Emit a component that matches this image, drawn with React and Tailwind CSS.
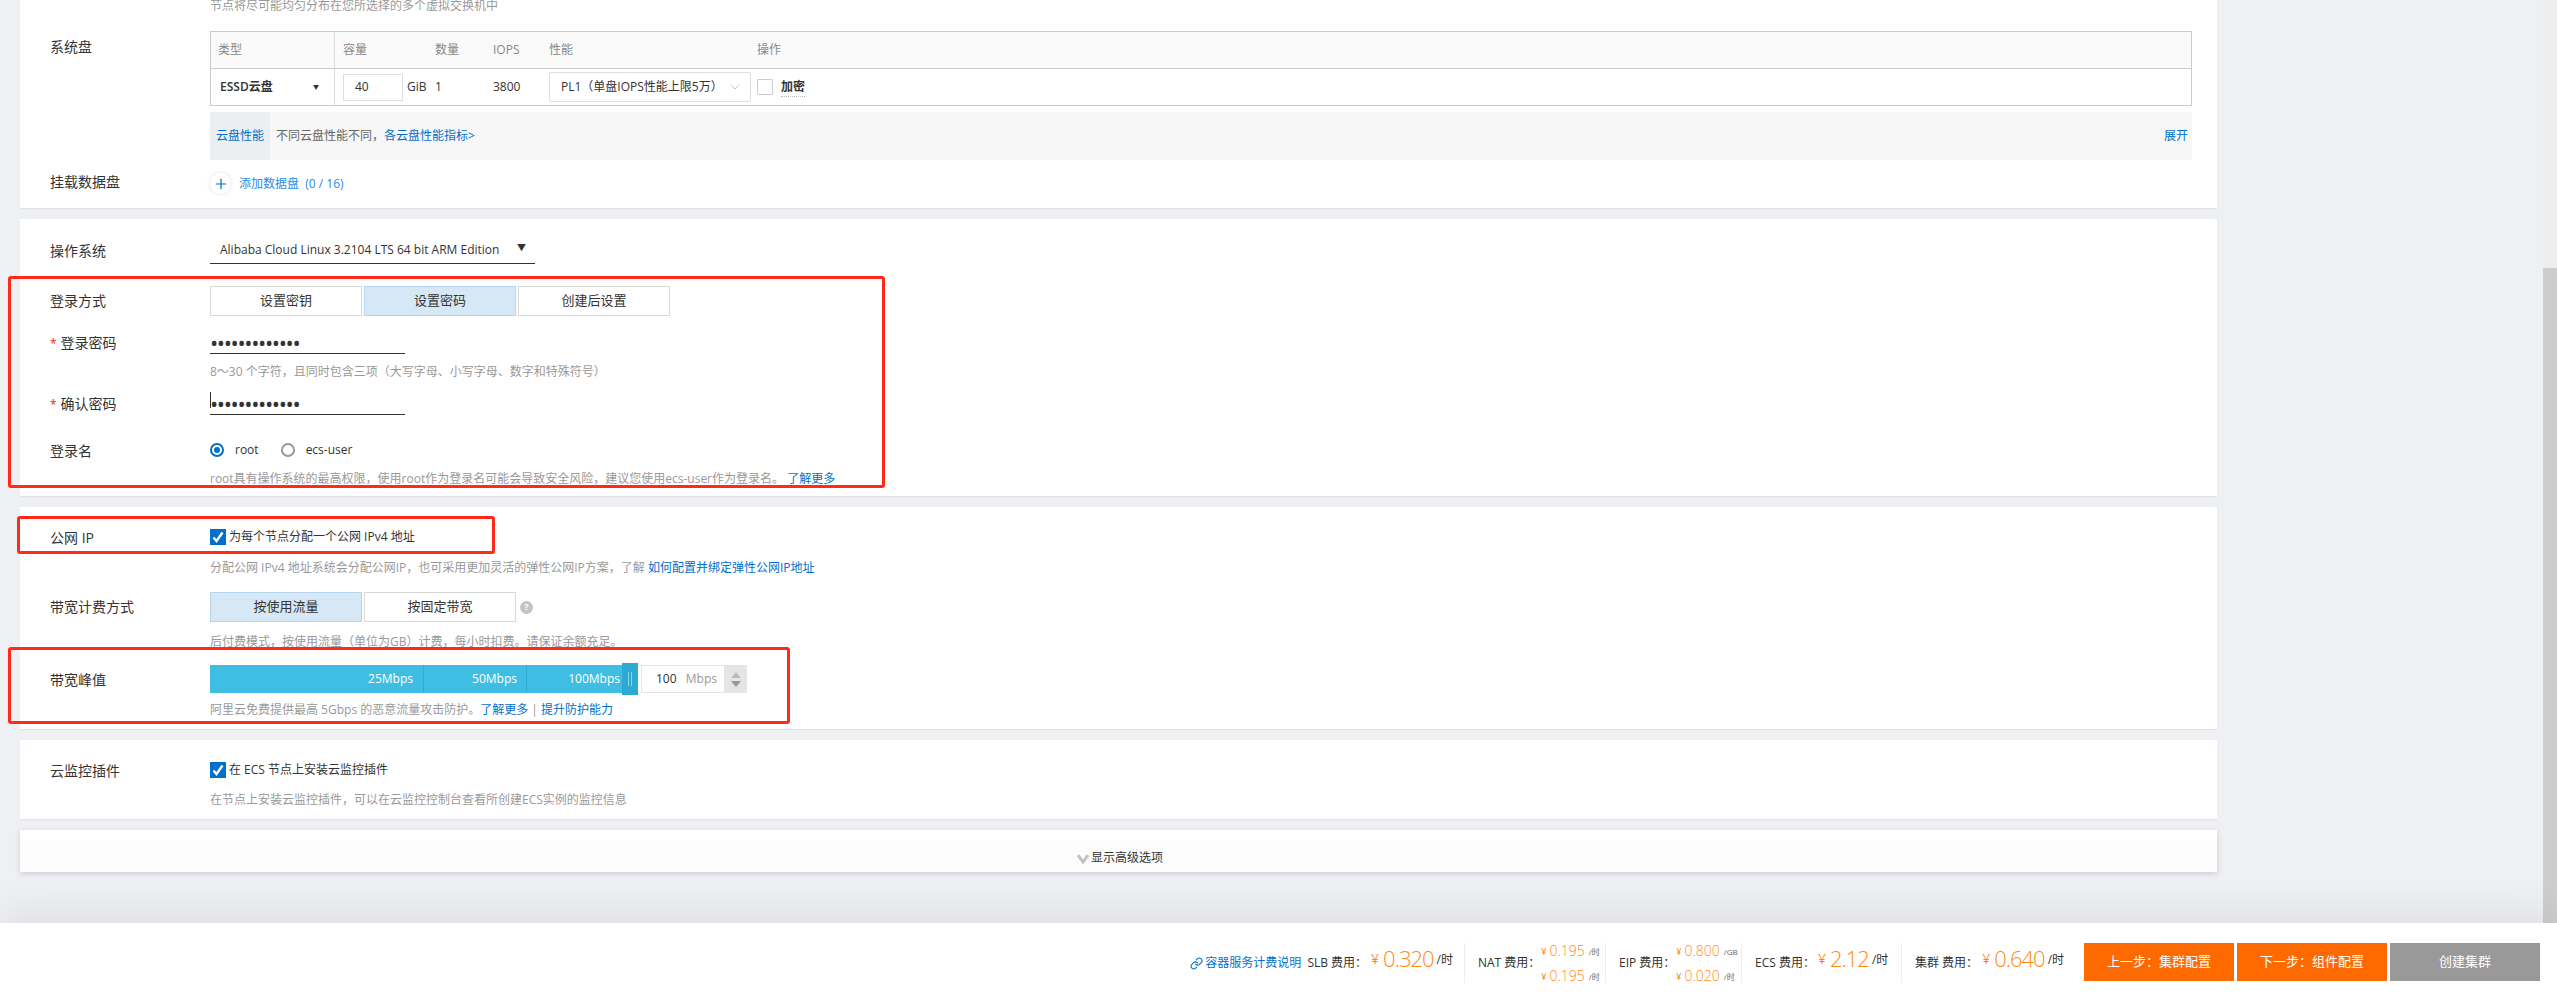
import { ChevronDown, Link, Plus } from 'lucide-react'

const hintCls = 'text-[12px] leading-[17px] text-[#999] whitespace-nowrap'
const linkCls = 'text-[#0070cc]'

function Row({ label, required, className = '', labelClass = '', children }) {
  return (
    <div className={`flex items-center pl-[30px] ${className}`}>
      <div className={`w-[160px] shrink-0 text-[14px] leading-[20px] text-[#333] whitespace-nowrap ${labelClass}`}>
        {required && <span className="text-[#e62412] text-[12px] mr-[4px]">*</span>}
        {label}
      </div>
      {children}
    </div>
  )
}

function Hint({ className = '', children }) {
  return <div className={`ml-[190px] ${hintCls} ${className}`}>{children}</div>
}

function Toggle({ active, children }) {
  return (
    <div className={`w-[152px] h-[30px] flex items-center justify-center text-[13px] text-[#333] border ${active ? 'bg-[#d6e8f5] border-[#b5d5ee]' : 'bg-white border-[#d9d9d9]'}`}>
      {children}
    </div>
  )
}

function Check({ children }) {
  return (
    <div className="flex items-center gap-[3px] text-[12px] text-[#333]">
      <span className="w-[16px] h-[16px] bg-[#0070cc] flex items-center justify-center">
        <svg width="12" height="12" viewBox="0 0 12 12">
          <path d="M1.5 6.5 L4.5 10 L10.5 1.5" fill="none" stroke="#fff" strokeWidth="2.4" />
        </svg>
      </span>
      {children}
    </div>
  )
}

function Radio({ on, children }) {
  return (
    <div className="flex items-center gap-[11px] text-[12px] text-[#333]">
      <span className={`w-[14px] h-[14px] rounded-full border-2 flex items-center justify-center ${on ? 'border-[#0070cc]' : 'border-[#999]'}`}>
        {on && <span className="w-[6px] h-[6px] rounded-full bg-[#0070cc]" />}
      </span>
      {children}
    </div>
  )
}

function PasswordInput({ caret }) {
  return (
    <div className="relative w-[195px] h-[24px] border-b border-[#333] flex items-center text-[22px] tracking-[-1.4px] text-[#333] leading-none">
      {caret && <span className="absolute left-0 top-[1px] w-px h-[16px] bg-[#333]" />}
      •••••••••••••
    </div>
  )
}

function RedBox({ className }) {
  return <div className={`absolute border-[3px] border-[#ff2a1a] rounded-[3px] pointer-events-none ${className}`} />
}

function Money({ big, value, unit }) {
  if (big) {
    return (
      <span className="flex items-center text-[#ff8a12] -mt-[10px]">
        <span className="text-[14px] mr-[4px]">¥</span>
        <span className="text-[22px] tracking-[-1px] leading-[30px] font-light">{value}</span>
        <span className="text-[12px] text-[#333] ml-[3px] mt-[4px]">/时</span>
      </span>
    )
  }
  return (
    <span className="flex items-center text-[#ff8a12] h-[25px]">
      <span className="text-[9px] mr-[3px] mt-[3px]">¥</span>
      <span className="text-[14px] font-light">{value}</span>
      <span className="text-[8px] text-[#666] ml-[4px] mt-[3px]">{unit}</span>
    </span>
  )
}

function FeeCell({ width, children }) {
  return (
    <div className={`${width} h-[40px] flex items-center pl-[13px] border-l border-[#eee] whitespace-nowrap`}>
      {children}
    </div>
  )
}

export default function App() {
  return (
    <div className="h-[1001px] overflow-hidden flex flex-col bg-[#eff0f4] font-['Open_Sans','Noto_Sans_CJK_SC',sans-serif]">
      <div className="flex-1 min-h-0 flex">
        <div className="flex-1 pl-[20px] pr-[326px]">
          {/* system disk */}
          <div className="h-[208px] bg-white shadow-[0_1px_1px_rgba(0,0,0,0.05)]">
            <Hint className="h-[31px] !leading-[12px]">节点将尽可能均匀分布在您所选择的多个虚拟交换机中</Hint>
            <div className="flex pl-[30px] pr-[25px]">
              <div className="w-[160px] shrink-0 text-[14px] leading-[20px] text-[#333] pt-[6px]">系统盘</div>
              <div className="flex-1 min-w-0">
                <div className="border border-[#ccc] text-[12px] text-[#333]">
                  <div className="h-[37px] flex items-center bg-[#fafafa] border-b border-[#ccc] text-[#888]">
                    <div className="w-[124px] h-full flex items-center pl-[7px] border-r border-[#ddd]">类型</div>
                    <div className="w-[100px] pl-[8px]">容量</div>
                    <div className="w-[58px]">数量</div>
                    <div className="w-[56px]">IOPS</div>
                    <div className="w-[208px]">性能</div>
                    <div>操作</div>
                  </div>
                  <div className="h-[36px] flex items-center">
                    <div className="w-[124px] h-full flex items-center justify-between pl-[9px] pr-[15px] border-r border-[#ddd] font-semibold">
                      ESSD云盘
                      <span className="text-[6px] text-[#333]">▼</span>
                    </div>
                    <div className="w-[100px] pl-[8px] flex items-center">
                      <span className="w-[60px] h-[27px] border border-[#ddd] flex items-center pl-[11px]">40</span>
                      <span className="ml-[4px]">GiB</span>
                    </div>
                    <div className="w-[58px]">1</div>
                    <div className="w-[56px]">3800</div>
                    <div className="w-[208px]">
                      <div className="w-[202px] h-[30px] border border-[#ddd] rounded-[2px] flex items-center justify-between pl-[11px] pr-[7px] whitespace-nowrap">
                        PL1（单盘IOPS性能上限5万）
                        <ChevronDown size={16} strokeWidth={1} color="#aaa" />
                      </div>
                    </div>
                    <div className="flex items-center gap-[8px]">
                      <span className="w-[16px] h-[16px] border border-[#ccc] rounded-[1px]" />
                      <span className="font-semibold border-b border-dotted border-[#bbb]">加密</span>
                    </div>
                  </div>
                </div>
                <div className="mt-[6px] h-[48px] bg-[#f7f7f8] flex items-center text-[12px] whitespace-nowrap">
                  <div className={`w-[60px] h-full bg-[#ebeff2] flex items-center justify-center ${linkCls}`}>云盘性能</div>
                  <span className="ml-[6px] text-[#666]">不同云盘性能不同，</span>
                  <span className={linkCls}>各云盘性能指标&gt;</span>
                  <span className={`ml-auto mr-[4px] ${linkCls}`}>展开</span>
                </div>
              </div>
            </div>
            <Row label="挂载数据盘" className="mt-[13px]" labelClass="-mt-[3px]">
              <div className="flex items-center text-[12px] text-[#2b8ae6]">
                <span className="w-[21px] h-[21px] rounded-full shadow-[0_0_4px_rgba(0,0,0,0.12)] flex items-center justify-center text-[#0070cc]">
                  <Plus size={16} strokeWidth={1.8} />
                </span>
                <span className="ml-[8px] whitespace-pre">添加数据盘  (0 / 16)</span>
              </div>
            </Row>
          </div>

          {/* login */}
          <div className="relative mt-[11px] h-[277px] bg-white pt-[18px] shadow-[0_1px_1px_rgba(0,0,0,0.05)]">
            <RedBox className="-left-[12px] top-[57px] w-[877px] h-[212px]" />
            <Row label="操作系统">
              <div className="relative w-[325px] h-[27px] border-b border-[#333] flex items-center pl-[10px] text-[12px] text-[#333]">
                Alibaba Cloud Linux 3.2104 LTS 64 bit ARM Edition
                <span className="absolute right-[9px] top-[4px] text-[9px] text-[#333]">▼</span>
              </div>
            </Row>
            <Row label="登录方式" className="mt-[22px]">
              <div className="flex gap-[2px]">
                <Toggle>设置密钥</Toggle>
                <Toggle active>设置密码</Toggle>
                <Toggle>创建后设置</Toggle>
              </div>
            </Row>
            <Row label="登录密码" required className="mt-[14px]" labelClass="mt-[3px]">
              <PasswordInput />
            </Row>
            <Hint className="mt-[9px]">8～30 个字符，且同时包含三项（大写字母、小写字母、数字和特殊符号）</Hint>
            <Row label="确认密码" required className="mt-[11px]" labelClass="mt-[3px]">
              <PasswordInput caret />
            </Row>
            <Row label="登录名" className="mt-[24px]" labelClass="mt-[2px]">
              <div className="flex gap-[22px]">
                <Radio on>root</Radio>
                <Radio>ecs-user</Radio>
              </div>
            </Row>
            <Hint className="mt-[9px]">
              root具有操作系统的最高权限，使用root作为登录名可能会导致安全风险，建议您使用ecs-user作为登录名。 <span className={linkCls}>了解更多</span>
            </Hint>
          </div>

          {/* network */}
          <div className="relative mt-[11px] h-[222px] bg-white pt-[22px] shadow-[0_1px_1px_rgba(0,0,0,0.05)]">
            <RedBox className="-left-[3px] top-[9px] w-[478px] h-[38px]" />
            <RedBox className="-left-[12px] top-[140px] w-[782px] h-[77px]" />
            <Row label="公网 IP" className="h-[16px]" labelClass="mt-[2px]">
              <Check>为每个节点分配一个公网 IPv4 地址</Check>
            </Row>
            <Hint className="mt-[14px]">
              分配公网 IPv4 地址系统会分配公网IP，也可采用更加灵活的弹性公网IP方案，了解 <span className={linkCls}>如何配置并绑定弹性公网IP地址</span>
            </Hint>
            <Row label="带宽计费方式" className="mt-[16px]">
              <div className="flex items-center gap-[2px]">
                <Toggle active>按使用流量</Toggle>
                <Toggle>按固定带宽</Toggle>
                <span className="ml-[2px] w-[13px] h-[13px] rounded-full bg-[#c4c4c4] text-white text-[9px] font-bold flex items-center justify-center">?</span>
              </div>
            </Row>
            <Hint className="mt-[11px]">后付费模式，按使用流量（单位为GB）计费，每小时扣费。请保证余额充足。</Hint>
            <Row label="带宽峰值" className="mt-[15px]" labelClass="mt-[2px]">
              <div className="flex items-center h-[28px] text-[12px]">
                <div className="w-[412px] h-full flex bg-[#40bde3] text-white">
                  <div className="w-[214px] pr-[10px] flex items-center justify-end border-r border-[#2dadd3]">25Mbps</div>
                  <div className="w-[103px] pr-[9px] flex items-center justify-end border-r border-[#2dadd3]">50Mbps</div>
                  <div className="flex-1 pr-[2px] flex items-center justify-end">100Mbps</div>
                </div>
                <div className="w-[16px] h-[32px] bg-[#2caad4] flex items-center justify-center gap-[2px]">
                  <span className="w-px h-[14px] bg-[#8fd4ea]" />
                  <span className="w-px h-[14px] bg-[#8fd4ea]" />
                </div>
                <div className="ml-[3px] w-[84px] h-full border border-[#e5e5e5] flex items-center justify-between pl-[14px] pr-[7px]">
                  <span className="text-[#333]">100</span>
                  <span className="text-[#999]">Mbps</span>
                </div>
                <div className="w-[22px] h-full bg-[#e5e5e5] flex flex-col items-center justify-center gap-[3px]">
                  <span className="w-0 h-0 border-x-[5px] border-x-transparent border-b-[6px] border-b-[#bbb]" />
                  <span className="w-0 h-0 border-x-[5px] border-x-transparent border-t-[6px] border-t-[#999]" />
                </div>
              </div>
            </Row>
            <Hint className="mt-[8px]">
              阿里云免费提供最高 5Gbps 的恶意流量攻击防护。<span className={linkCls}>了解更多</span> | <span className={linkCls}>提升防护能力</span>
            </Hint>
          </div>

          {/* monitor plugin */}
          <div className="mt-[11px] h-[79px] bg-white pt-[22px] shadow-[0_1px_1px_rgba(0,0,0,0.05)]">
            <Row label="云监控插件" className="h-[16px]" labelClass="mt-[2px]">
              <Check>在 ECS 节点上安装云监控插件</Check>
            </Row>
            <Hint className="mt-[13px]">在节点上安装云监控插件，可以在云监控控制台查看所创建ECS实例的监控信息</Hint>
          </div>

          {/* advanced */}
          <div className="mt-[11px] h-[42px] pt-[10px] bg-white shadow-[0_2px_6px_rgba(0,0,0,0.14)]">
            <div className="h-[32px] bg-[#fcfcfc] flex items-center justify-center gap-[2px] pt-[4px] pl-[3px] text-[12px] text-[#333]">
              <svg width="12" height="12" viewBox="0 0 12 12">
                <path d="M1 3 L6 10 L11 3" fill="none" stroke="#c2c2c2" strokeWidth="3" />
              </svg>
              显示高级选项
            </div>
          </div>
        </div>
        <div className="w-[14px] bg-[#eeeeee] flex flex-col">
          <div className="mt-[268px] flex-1 bg-[#cdcdcd]" />
        </div>
      </div>

      {/* footer */}
      <div className="relative h-[78px] bg-white pt-[20px] pr-[17px] flex justify-end shadow-[0_-12px_40px_rgba(0,0,0,0.07)] text-[12px] text-[#333]">
        <div className="flex items-center h-[40px] whitespace-nowrap pr-[11px]">
          <span className={`flex items-center gap-[2px] mr-[6px] ${linkCls}`}>
            <Link size={13} />
            容器服务计费说明
          </span>
          <span className="mr-[4px]">SLB 费用：</span>
          <Money big value="0.320" />
        </div>
        <FeeCell width="w-[141px]">
          <span className="mr-[1px]">NAT 费用：</span>
          <span className="flex flex-col">
            <Money value="0.195" unit="/时" />
            <Money value="0.195" unit="/时" />
          </span>
        </FeeCell>
        <FeeCell width="w-[136px]">
          <span className="mr-[1px]">EIP 费用：</span>
          <span className="flex flex-col">
            <Money value="0.800" unit="/GB" />
            <Money value="0.020" unit="/时" />
          </span>
        </FeeCell>
        <FeeCell width="w-[160px]">
          <span className="mr-[3px]">ECS 费用：</span>
          <Money big value="2.12" />
        </FeeCell>
        <FeeCell width="w-[183px]">
          <span className="mr-[4px]">集群 费用：</span>
          <Money big value="0.640" />
        </FeeCell>
        <div className="flex gap-[3px] text-[13px] text-white">
          <div className="w-[150px] h-[38px] bg-[#ff6a00] flex items-center justify-center">上一步：集群配置</div>
          <div className="w-[150px] h-[38px] bg-[#ff6a00] flex items-center justify-center">下一步：组件配置</div>
          <div className="w-[150px] h-[38px] bg-[#999] flex items-center justify-center">创建集群</div>
        </div>
      </div>
    </div>
  )
}
